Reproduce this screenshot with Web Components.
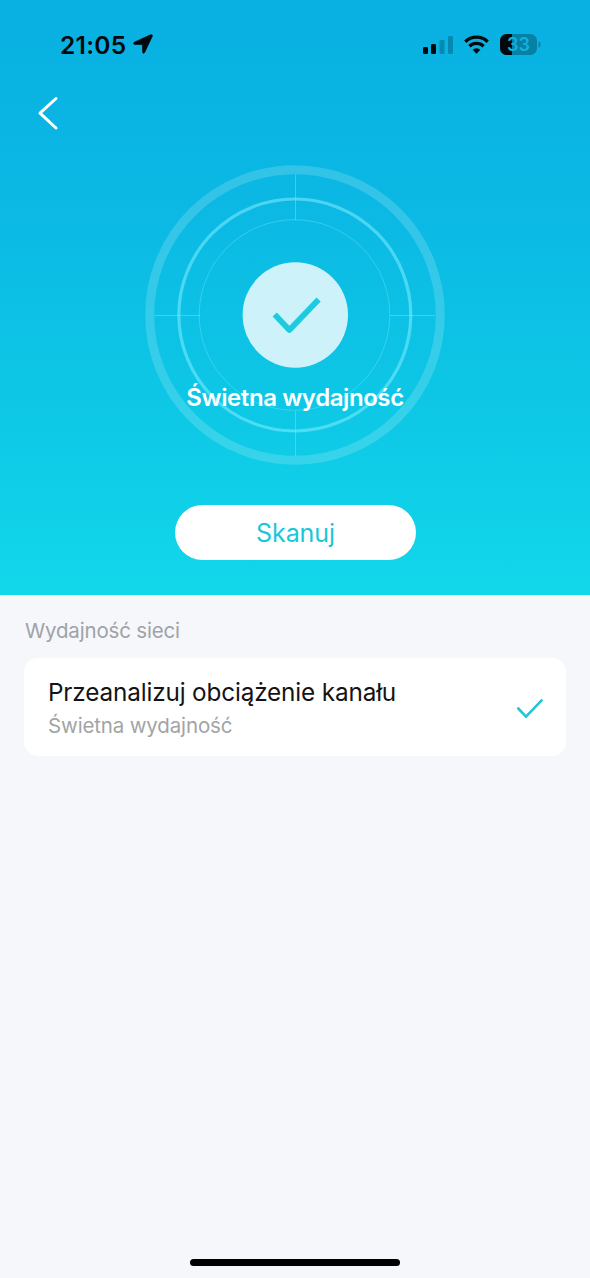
<!DOCTYPE html>
<html lang="pl">
<head>
<meta charset="utf-8">
<title>Wydajność sieci</title>
<style>
html,body{margin:0;height:100%}
body{font-family:Inter,"Liberation Sans",sans-serif;background:#f5f7fb;overflow:hidden}
</style>
</head>
<body>
<network-page></network-page>
<script>
const define = (name, html) => customElements.define(name, class extends HTMLElement {
  constructor() {
    super();
    this.attachShadow({ mode: 'open' }).innerHTML = html;
  }
});

define('status-bar', `
<style>
:host{display:flex;align-items:center;justify-content:space-between;height:88px;padding:0 49px 0 60px;box-sizing:border-box;color:#02090c}
.left,.right{display:flex;align-items:center}
.time{font-size:24.500px;font-weight:600;line-height:30px;letter-spacing:.3px;padding-top:1px}
.left svg{margin-left:6px}
.right{gap:11px}
.battery{display:grid;width:41px;height:21px}
.battery>*{grid-area:1/1}
.level{width:37px;text-align:center;font-size:18px;line-height:21px;font-weight:600;color:#12b1df}
svg{display:block}
</style>
<div class="left"><span class="time"><slot></slot></span>
<svg width="20" height="20" viewBox="0 0 20 20"><path d="M1.200 8.200 17.500.8Q20 .1 19.200 2.500L11.700 18.400Q10.300 20.500 9.600 18.300L9.400 10.600 1.700 10.500Q-.7 9.800 1.200 8.200Z" fill="currentColor" stroke="currentColor" stroke-width=".6"/></svg></div>
<div class="right">
<svg width="30" height="19" viewBox="0 0 30 19"><g fill="currentColor"><rect x="0" y="12" width="5" height="7" rx="1.300"/><rect x="8" y="9" width="5" height="10" rx="1.300"/></g><g fill="#0689b0"><rect x="16.500" y="5" width="5" height="14" rx="1.300"/><rect x="25" y="1" width="5" height="18" rx="1.300"/></g></svg>
<svg width="25" height="19" viewBox="0 0 25 19"><g fill="none" stroke="currentColor" stroke-width="3.300"><path d="M1.300 6.700a16 16 0 0 1 22.400 0"/><path d="M5.400 11.300a10.300 10.300 0 0 1 14.200 0"/></g><path d="M8.600 14.800a5.600 5.600 0 0 1 7.800 0L12.500 18.800Z" fill="currentColor"/></svg>
<div class="battery"><svg width="41" height="21" viewBox="0 0 41 21"><defs><clipPath id="b"><rect width="37" height="21" rx="6.500"/></clipPath></defs><g clip-path="url(#b)"><path fill="#0681a6" d="M0 0h37v21H0z"/><path fill="currentColor" d="M0 0h12v21H0z"/></g><path d="M38.500 7.200q2.200 1 2.200 3.300t-2.200 3.300z" fill="#0681a6"/></svg><span class="level">33</span></div>
</div>`);

define('nav-back', `
<style>:host{display:flex;align-items:center;height:50px;padding-left:37px}svg{display:block}</style>
<svg width="22" height="36" viewBox="0 0 22 36"><path d="M19 3.500 3 18.200 19 33" fill="none" stroke="#fff" stroke-width="3" stroke-linecap="round" stroke-linejoin="round"/></svg>`);

define('scan-radar', `
<style>
:host{display:grid;width:300px;height:300px;color:#fff}
svg,.label{grid-area:1/1}
svg{display:block}
.label{margin-top:215px;height:36px;line-height:36px;text-align:center;font-size:24px;font-weight:600;letter-spacing:-.42px;white-space:nowrap;z-index:1}
</style>
<svg width="300" height="300" viewBox="0 0 300 300" fill="none">
<circle cx="150" cy="150" r="145.300" stroke="#fff" stroke-opacity=".17" stroke-width="9"/>
<g stroke="#7fecff">
<circle cx="149.800" cy="150" r="116" stroke-opacity=".55" stroke-width="3.200"/>
<circle cx="149.500" cy="150" r="95.300" stroke-opacity=".35"/>
<path d="M150.500 9.500V55M150.500 246v45M9.500 150.500H55M245 150.500h45.500" stroke-opacity=".42"/>
</g>
<circle cx="150.300" cy="150" r="52.700" fill="#cef2fa"/>
<path d="m129.700 149.500 14.700 15.500 29.200-30.500" stroke="#1ccbe0" stroke-width="5.800" stroke-linejoin="round"/>
</svg>
<div class="label"><slot></slot></div>`);

define('pill-button', `
<style>
:host{display:block}
button{display:block;width:241px;height:55px;padding:1px 0 0 1px;border:0;border-radius:28px;background:#fff;color:#1bc6da;font:400 25px/54px Inter,"Liberation Sans",sans-serif;letter-spacing:-.1px}
</style><button type="button"><slot></slot></button>`);

define('result-card', `
<style>
:host{display:flex;align-items:center;justify-content:space-between;box-sizing:border-box;height:98px;padding:2px 23px 0 24px;background:#fff;border-radius:14px}
.title{font-size:24.300px;line-height:34px;letter-spacing:-.15px;color:#141414;white-space:nowrap}
.sub{font-size:20.500px;line-height:33px;letter-spacing:-.15px;color:#a2a4a5;white-space:nowrap}
svg{display:block;margin-top:1px}
</style>
<div><div class="title"><slot name="title"></slot></div><div class="sub"><slot name="status"></slot></div></div>
<svg width="26" height="20" viewBox="0 0 26 20"><path d="m1.300 9.500 7.700 8.200L24.600 1.400" fill="none" stroke="#20c6da" stroke-width="2.600" stroke-linecap="round" stroke-linejoin="miter"/></svg>`);

define('network-page', `
<style>
:host{display:flex;flex-direction:column;height:1278px;width:590px}
header{display:flex;flex-direction:column;height:595px;background:linear-gradient(#08b0e1,#0bb8e4 33%,#0ec9e6 72%,#12d7eb)}
.hero{display:flex;flex-direction:column;align-items:center;padding-top:27px;gap:40px}
main{flex:1;padding:19px 24px 0}
h2{margin:0 0 11px 1px;font-size:20.500px;font-weight:400;line-height:33px;letter-spacing:-.17px;color:#a0a2a7}
footer{display:flex;justify-content:center;padding-bottom:12px}
.home{width:210px;height:7px;border-radius:4px;background:#000}
</style>
<header>
<status-bar>21:05</status-bar>
<nav-back></nav-back>
<div class="hero"><scan-radar>Świetna wydajność</scan-radar><pill-button>Skanuj</pill-button></div>
</header>
<main><h2>Wydajność sieci</h2>
<result-card><span slot="title">Przeanalizuj obciążenie kanału</span><span slot="status">Świetna wydajność</span></result-card></main>
<footer><div class="home"></div></footer>`);
</script>
</body>
</html>
